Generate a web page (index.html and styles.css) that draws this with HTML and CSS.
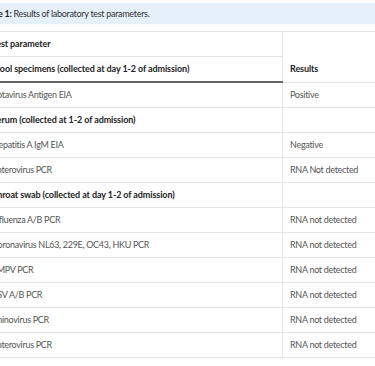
FILE: index.html
```html
<!DOCTYPE html>
<html>
<head>
<meta charset="utf-8">
<link rel="stylesheet" href="styles.css">
</head>
<body>
<div class="viewport">
  <div class="wrap">
    <div class="caption"><b>Table 1:</b> Results of laboratory test parameters.</div>
    <table class="lab">
      <thead>
        <tr>
          <th class="c1">Test parameter</th>
          <th class="c2 res" rowspan="2">Results</th>
        </tr>
        <tr>
          <th class="c1 thick">Stool specimens (collected at day 1-2 of admission)</th>
        </tr>
      </thead>
      <tbody>
        <tr><td>Rotavirus Antigen EIA</td><td class="c2">Positive</td></tr>
        <tr><th class="c1">Serum (collected at 1-2 of admission)</th><td class="c2"></td></tr>
        <tr><td>Hepatitis A IgM EIA</td><td class="c2">Negative</td></tr>
        <tr><td>Enterovirus PCR</td><td class="c2">RNA Not detected</td></tr>
        <tr><th class="c1">Throat swab (collected at day 1-2 of admission)</th><td class="c2"></td></tr>
        <tr><td>Influenza A/B PCR</td><td class="c2">RNA not detected</td></tr>
        <tr><td>Coronavirus NL63, 229E, OC43, HKU PCR</td><td class="c2">RNA not detected</td></tr>
        <tr><td>hMPV PCR</td><td class="c2">RNA not detected</td></tr>
        <tr><td>RSV A/B PCR</td><td class="c2">RNA not detected</td></tr>
        <tr><td>Rhinovirus PCR</td><td class="c2">RNA not detected</td></tr>
        <tr><td>Enterovirus PCR</td><td class="c2">RNA not detected</td></tr>
      </tbody>
    </table>
  </div>
</div>
</body>
</html>
```
FILE: styles.css
```css
html, body {
  margin: 0;
  padding: 0;
  background: #fff;
}
.viewport {
  width: 375px;
  height: 366px;
  overflow: hidden;
}
.wrap {
  margin-left: -17px;
  padding-top: 3px;
  width: 440px;
  font-family: Lato, "Open Sans", sans-serif;
  font-size: 9px;
  letter-spacing: -0.3px;
  color: #555;
}
.caption {
  background: #e6f0fb;
  height: 21px;
  line-height: 21px;
  padding-left: 0;
  color: #333;
}
.caption b {
  color: #222;
  font-weight: 700;
}
.lab {
  margin-top: 7px;
  border-collapse: collapse;
  width: 440px;
  table-layout: fixed;
}
.lab th, .lab td {
  text-align: left;
  padding: 6px 7px;
  line-height: 12px;
  border-top: 1px solid #e6e6e6;
  border-bottom: 1px solid #e6e6e6;
  white-space: nowrap;
  overflow: hidden;
}
.lab th {
  font-weight: 700;
  color: #222;
  letter-spacing: -0.1px;
}
.lab .c1, .lab td:first-child {
  width: 283px;
  padding-left: 9px;
}
.lab .c2 {
  border-left: 1px solid #e6e6e6;
}
.lab .res {
  vertical-align: bottom;
  padding-bottom: 7px;
}
.lab th.thick {
  border-bottom: 2px solid #666;
}
```
